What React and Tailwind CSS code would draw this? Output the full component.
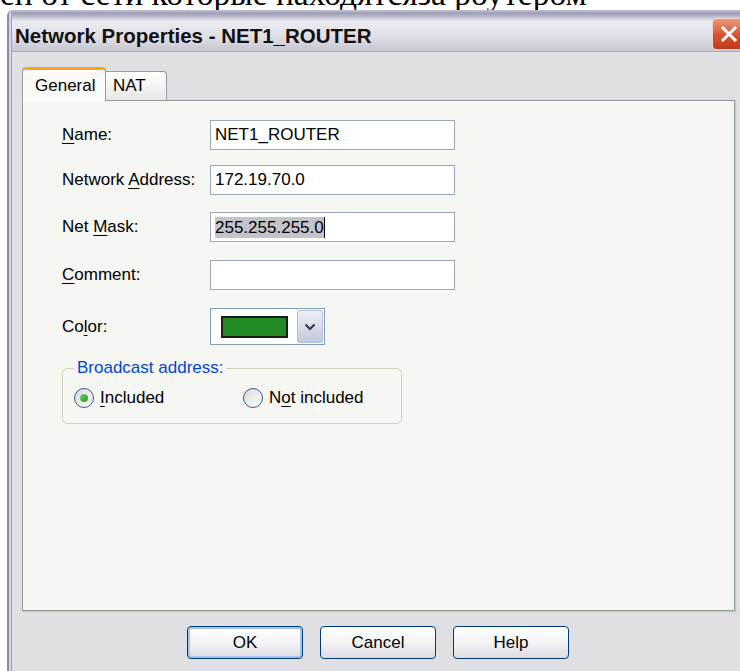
import React from 'react';

const sans = { fontFamily: '"Liberation Sans", Arial, sans-serif' };
const serif = { fontFamily: '"Liberation Serif", "Times New Roman", serif' };

function Key({ children }) {
    return <span className="underline underline-offset-[3px] decoration-1">{children}</span>;
}

function TextField({ label, value, selected, className = '' }) {
    return (
        <div className={`flex items-center h-[30px] ${className}`}>
            <div className="w-[148px] text-[17px] text-black">{label}</div>
            <div className="w-[245px] h-[30px] border border-[#9aa9b9] bg-white flex items-center pl-[4px] text-[17px] text-black">
                {selected ? (
                    <>
                        <span className="bg-[#c3c3cc] leading-[21px]">{value}</span>
                        <span className="w-px h-[21px] bg-black" />
                    </>
                ) : (
                    value
                )}
            </div>
        </div>
    );
}

function Radio({ checked, children, className = '' }) {
    return (
        <div className={`flex items-center ${className}`}>
            <div className="w-[20px] h-[20px] rounded-full border-[1.5px] border-[#295e8e] bg-linear-to-br from-[#d8d8d2] to-white flex items-center justify-center">
                {checked && <div className="w-[8px] h-[8px] rounded-full bg-linear-to-br from-[#6ed46e] to-[#179417]" />}
            </div>
            <span className="ml-[6px] text-[17px] text-black">{children}</span>
        </div>
    );
}

function Button({ children, primary }) {
    return (
        <button
            className={`w-[116px] h-[33px] rounded-[4px] border border-[#003c74] bg-linear-to-b from-white via-[#f4f4f6] to-[#dcdbe4] text-[17px] text-black flex items-center justify-center ${
                primary ? 'shadow-[inset_0_0_0_2px_#a9c4ec]' : ''
            }`}
        >
            {children}
        </button>
    );
}

export default function App() {
    return (
        <div className="w-[740px] h-[671px] overflow-hidden bg-white flex flex-col" style={sans}>
            {/* caption line above the dialog, only its lower edge shows */}
            <div className="h-[10px] overflow-hidden shrink-0">
                <div className="-mt-[23px] text-[33.5px] leading-none whitespace-nowrap text-black" style={serif}>
                    ен от сети которые находятсяза роутером
                </div>
            </div>

            {/* window frame */}
            <div className="ml-[7px] w-[743px] flex-1 flex border-l-2 border-[#8b8aa7] rounded-tl-[6px] overflow-hidden">
                <div className="flex-1 flex border-l-2 border-[#d5d4e1]">
                    <div className="flex-1 flex flex-col border-l border-[#a3a2b6]">
                        {/* title bar */}
                        <div className="h-[42px] shrink-0 flex items-start justify-between border-b border-[#a9a9bc] bg-[linear-gradient(180deg,#c4c4d4_0%,#9d9db6_8%,#ececf2_28%,#dcdce5_70%,#c6c6d3_100%)]">
                            <div className="mt-[16px] ml-[3px] text-[20.5px] leading-[20px] font-bold text-[#111]">
                                Network Properties - NET1_ROUTER
                            </div>
                            <div className="mt-[8px] mr-[5px] w-[33px] h-[32px] rounded-[4px] border border-[#f4d6cc] bg-[linear-gradient(180deg,#ec9a80_0%,#d5522f_55%,#c23a1c_100%)] flex items-center justify-center">
                                <svg width="18" height="18" viewBox="0 0 18 18">
                                    <path d="M3 3 L15 15 M15 3 L3 15" stroke="white" strokeWidth="3" strokeLinecap="square" />
                                </svg>
                            </div>
                        </div>

                        {/* dialog body */}
                        <div className="flex-1 bg-[#e0dfe3] pl-[10px] pt-[15px]">
                            {/* tabs */}
                            <div className="flex items-end h-[33px]">
                                <div className="relative z-10 -mb-px w-[84px] h-[34px] bg-[#fbfbf9] border-x border-[#919b9c] rounded-t-[4px] border-t-[3px] border-t-[#f5a623] flex items-center pl-[12px] text-[17px] text-black">
                                    General
                                </div>
                                <div className="w-[61px] h-[29px] border-t border-r border-[#919b9c] rounded-tr-[4px] bg-linear-to-b from-white to-[#e8e8e4] flex items-center pl-[7px] text-[17px] text-black">
                                    NAT
                                </div>
                            </div>

                            {/* tab page */}
                            <div className="w-[713px] h-[511px] border border-[#919b9c] bg-[#f6f6f3] shadow-[1px_1px_0_#c9ccc0,2px_2px_0_#dcdcd2] pl-[39px] pt-[19px]">
                                <TextField label={<><Key>N</Key>ame:</>} value="NET1_ROUTER" />
                                <TextField className="mt-[15px]" label={<>Network <Key>A</Key>ddress:</>} value="172.19.70.0" />
                                <TextField className="mt-[17px]" label={<>Net <Key>M</Key>ask:</>} value="255.255.255.0" selected />
                                <TextField className="mt-[18px]" label={<><Key>C</Key>omment:</>} value="" />

                                <div className="mt-[18px] flex items-center h-[37px]">
                                    <div className="w-[148px] text-[17px] text-black">
                                        Co<Key>l</Key>or:
                                    </div>
                                    <div className="w-[115px] h-[37px] border border-[#7f9db9] bg-white flex items-center">
                                        <div className="ml-[10px] w-[67px] h-[22px] bg-[#228b22] border-2 border-[#1c1c1c]" />
                                        <div className="ml-auto mr-[1px] w-[26px] h-[33px] rounded-[2px] border border-[#b6bdd3] bg-linear-to-b from-[#eef0f8] to-[#c4c9dc] flex items-center justify-center">
                                            <svg width="12" height="8" viewBox="0 0 12 8">
                                                <path d="M1.5 1.5 L6 6 L10.5 1.5" fill="none" stroke="#3a3a4a" strokeWidth="2.2" />
                                            </svg>
                                        </div>
                                    </div>
                                </div>

                                <fieldset className="mt-[13px] w-[340px] h-[66px] border border-[#d0d0bf] rounded-[5px] pl-[11px]">
                                    <legend className="px-[3px] text-[17px] leading-[20px] text-[#0046d5]">Broadcast address:</legend>
                                    <div className="flex items-center mt-[7px]">
                                        <Radio checked className="w-[169px]">
                                            <Key>I</Key>ncluded
                                        </Radio>
                                        <Radio>
                                            N<Key>o</Key>t included
                                        </Radio>
                                    </div>
                                </fieldset>
                            </div>

                            {/* dialog buttons */}
                            <div className="mt-[15px] ml-[165px] flex gap-[17px]">
                                <Button primary>OK</Button>
                                <Button>Cancel</Button>
                                <Button>Help</Button>
                            </div>
                        </div>
                    </div>
                </div>
            </div>
        </div>
    );
}
